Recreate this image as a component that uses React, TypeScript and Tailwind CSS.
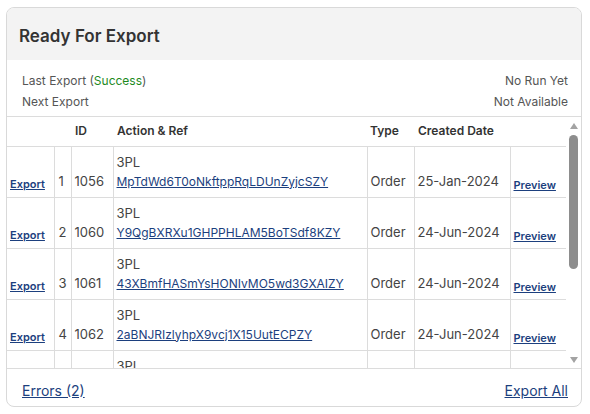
import React from "react";

interface ExportRow {
  n: number;
  id: number;
  action: string;
  ref: string;
  type: string;
  created: string;
}

const ROWS: ExportRow[] = [
  { n: 1, id: 1056, action: "3PL", ref: "MpTdWd6T0oNkftppRqLDUnZyjcSZY", type: "Order", created: "25-Jan-2024" },
  { n: 2, id: 1060, action: "3PL", ref: "Y9QgBXRXu1GHPPHLAM5BoTSdf8KZY", type: "Order", created: "24-Jun-2024" },
  { n: 3, id: 1061, action: "3PL", ref: "43XBmfHASmYsHONIvMO5wd3GXAIZY", type: "Order", created: "24-Jun-2024" },
  { n: 4, id: 1062, action: "3PL", ref: "2aBNJRIzlyhpX9vcj1X15UutECPZY", type: "Order", created: "24-Jun-2024" },
  { n: 5, id: 1063, action: "3PL", ref: "kQ7vTn2WcR8bHLpXe4MzYa9sDfUZY", type: "Order", created: "24-Jun-2024" },
];

const FONT = "font-['Inter','Noto_Sans',sans-serif]";

function FakeScrollbar() {
  return (
    <div className="w-[15px] shrink-0 flex flex-col items-center">
      <svg width="10" height="8" viewBox="0 0 10 8" className="mt-[5px]">
        <path d="M5 1 L9 7 L1 7 Z" fill="#a3a3a3" />
      </svg>
      <div className="mt-[5px] h-[134px] w-[9px] rounded-full bg-[#8d8d8d]" />
      <div className="flex-1" />
      <svg width="10" height="8" viewBox="0 0 10 8" className="mb-[4px]">
        <path d="M1 1 L9 1 L5 7 Z" fill="#a3a3a3" />
      </svg>
    </div>
  );
}

export default function App() {
  return (
    <div className={`${FONT} bg-white w-[590px] h-[414px] pl-[6px] pt-[7px]`}>
      <div className="w-[576px] h-[400px] border border-[#d9d9d9] rounded-[8px] overflow-hidden flex flex-col">
        {/* title bar */}
        <div className="h-[52px] shrink-0 bg-[#f3f3f3] flex items-center px-[12px] pt-[5px]">
          <h2 className="text-[17px] font-semibold text-[#333]">Ready For Export</h2>
        </div>

        {/* last / next export summary */}
        <div className="h-[57px] shrink-0 pt-[10px] px-[13px] pl-[15px] text-[12px] leading-[21px] text-[#555] border-b border-[#dcdcdc]">
          <div className="flex justify-between">
            <span>
              Last Export (<span className="text-[#1e8a1e]">Success</span>)
            </span>
            <span>No Run Yet</span>
          </div>
          <div className="flex justify-between">
            <span>Next Export</span>
            <span>Not Available</span>
          </div>
        </div>

        {/* queue table */}
        <div className="h-[251px] shrink-0 flex">
          <div className="flex-1 overflow-hidden">
            <table className="w-[559px] table-fixed border-collapse text-[13px] text-[#444]">
              <colgroup>
                <col className="w-[47px]" />
                <col className="w-[17px]" />
                <col className="w-[42px]" />
                <col className="w-[254px]" />
                <col className="w-[47px]" />
                <col className="w-[96px]" />
                <col className="w-[56px]" />
              </colgroup>
              <thead>
                <tr className="h-[29px] border-b border-[#dcdcdc] text-[12px] font-semibold text-[#333] text-left">
                  <th />
                  <th />
                  <th className="pl-[4px] font-semibold">ID</th>
                  <th className="pl-[4px] font-semibold">Action &amp; Ref</th>
                  <th className="pl-[3px] font-semibold">Type</th>
                  <th className="pl-[4px] font-semibold">Created Date</th>
                  <th />
                </tr>
              </thead>
              <tbody>
                {ROWS.map((r) => (
                  <tr key={r.id} className="h-[51px] border-b border-[#dcdcdc]">
                    <td className="pl-[3px] pb-[3px] align-bottom">
                      <a className="text-[11px] font-semibold text-[#1c3f7e] underline">Export</a>
                    </td>
                    <td className="border-l border-[#dcdcdc] pl-[4px] pb-[5px] align-bottom">{r.n}</td>
                    <td className="border-l border-[#dcdcdc] pl-[3px] pb-[5px] align-bottom">{r.id}</td>
                    <td className="border-l border-[#dcdcdc] pl-[3px] pb-[5px] align-bottom leading-[20px]">
                      <div>{r.action}</div>
                      <a className="block text-[12px] text-[#1c3f7e] underline whitespace-nowrap">{r.ref}</a>
                    </td>
                    <td className="border-l border-[#dcdcdc] pl-[3px] pb-[5px] align-bottom">{r.type}</td>
                    <td className="border-l border-[#dcdcdc] pl-[3px] pb-[5px] align-bottom">{r.created}</td>
                    <td className="border-l border-[#dcdcdc] pl-[3px] pb-[2px] align-bottom">
                      <a className="text-[11px] font-semibold text-[#1c3f7e] underline">Preview</a>
                    </td>
                  </tr>
                ))}
              </tbody>
            </table>
          </div>
          <FakeScrollbar />
        </div>

        {/* footer links */}
        <div className="flex-1 border-t border-[#dcdcdc] flex items-center justify-between pt-[5px] pl-[15px] pr-[13px] text-[14px] text-[#1c3f7e]">
          <a className="underline">Errors (2)</a>
          <a className="underline">Export All</a>
        </div>
      </div>
    </div>
  );
}
